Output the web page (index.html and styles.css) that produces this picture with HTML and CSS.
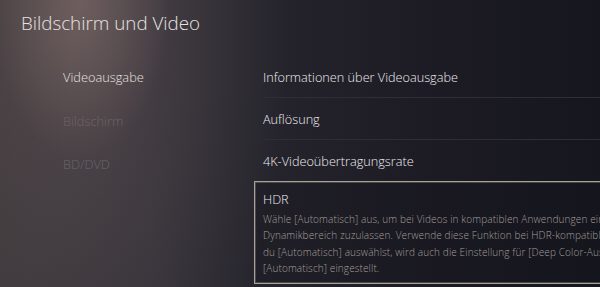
FILE: index.html
```html
<!DOCTYPE html>
<html lang="de">
<head>
<meta charset="utf-8">
<link rel="stylesheet" href="styles.css">
</head>
<body>
<div class="screen">
  <h1 class="title">Bildschirm und Video</h1>
  <div class="main">
    <nav class="menu">
      <div class="menu-item active">Videoausgabe</div>
      <div class="menu-item">Bildschirm</div>
      <div class="menu-item">BD/DVD</div>
    </nav>
    <div class="list">
      <div class="row sep">Informationen über Videoausgabe</div>
      <div class="row sep">Auflösung</div>
      <div class="row">4K-Videoübertragungsrate</div>
      <div class="card">
        <div class="card-title">HDR</div>
        <p class="card-text">Wähle [Automatisch] aus, um bei Videos in kompatiblen Anwendungen einen hohen<br>Dynamikbereich zuzulassen. Verwende diese Funktion bei HDR-kompatiblen Fernsehern. Wenn<br>du [Automatisch] auswählst, wird auch die Einstellung für [Deep Color-Ausgabe] auf<br>[Automatisch] eingestellt.</p>
      </div>
    </div>
  </div>
</div>
</body>
</html>
```

FILE: styles.css
```css
html, body {
  margin: 0;
  padding: 0;
}
body {
  width: 600px;
  height: 287px;
  overflow: hidden;
  font-family: "Open Sans", "Noto Sans", sans-serif;
  background: #1a1a22;
}
.screen {
  width: 600px;
  height: 287px;
  overflow: hidden;
  background:
    radial-gradient(ellipse 90px 160px at 80px 0px, rgba(150,125,120,0.45), rgba(150,125,120,0) 100%),
    radial-gradient(ellipse 220px 420px at 70px 40px, rgba(110,95,95,0.45), rgba(110,95,95,0) 100%),
    linear-gradient(90deg, #3a3539 0%, #333038 25%, #25242c 45%, #1d1c25 70%, #16161f 100%);
}
.title {
  margin: 0;
  padding: 10px 0 0 21px;
  height: 46px;
  box-sizing: border-box;
  font-size: 18.8px;
  font-weight: 300;
  color: #e6e2e0;
  line-height: 26px;
}
.main {
  display: grid;
  grid-template-columns: 254px 1fr;
}
.menu {
  padding: 20px 0 0 63px;
  display: flex;
  flex-direction: column;
}
.menu-item {
  height: 43.5px;
  line-height: 22px;
  font-size: 12.8px;
  font-weight: 300;
  color: #6a656b;
}
.menu-item.active {
  color: #e6e2e0;
}
.list {
  padding-top: 10px;
  display: flex;
  flex-direction: column;
}
.row {
  margin-left: 9px;
  height: 42px;
  box-sizing: border-box;
  padding-top: 10px;
  line-height: 22px;
  font-size: 12.7px;
  font-weight: 300;
  color: #eeecee;
  white-space: nowrap;
}
.row.sep {
  border-bottom: 1px solid #2e2e38;
}
.card {
  margin-top: -1px;
  width: 420px;
  height: 103px;
  box-sizing: border-box;
  border: 1px solid #a8a198;
  box-shadow: inset 0 0 0 1px rgba(120,115,110,0.5);
  padding: 7px 0 0 8px;
  background: rgba(20,20,28,0.3);
}
.card-title {
  font-size: 12.7px;
  font-weight: 300;
  line-height: 20px;
  color: #eceaec;
}
.card-text {
  margin: 2px 0 0 0;
  font-size: 10px;
  font-weight: 300;
  letter-spacing: 0.12px;
  line-height: 16.3px;
  color: #a29d9a;
  white-space: nowrap;
}
```
